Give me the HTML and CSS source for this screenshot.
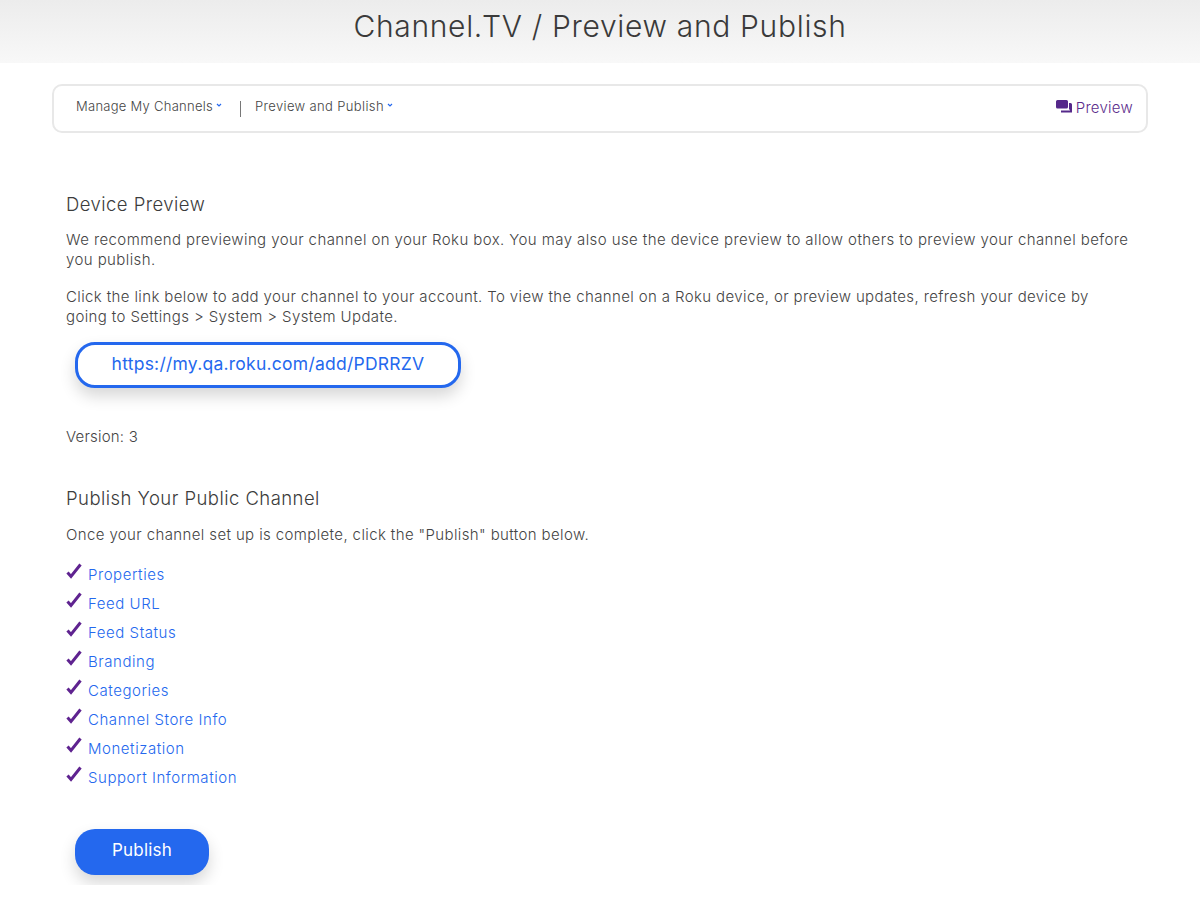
FILE: index.html
```html
<!DOCTYPE html>
<html lang="en">
<head>
<meta charset="utf-8">
<title>Channel.TV / Preview and Publish</title>
<link rel="stylesheet" href="styles.css">
</head>
<body>
<header class="top"><h1>Channel.TV / Preview and Publish</h1></header>
<nav class="crumbs">
  <div class="crumb-item first">Manage My Channels<svg class="caret" viewBox="0 0 6 4"><path d="M1 1l2 2 2-2"/></svg></div>
  <span class="sep"></span>
  <div class="crumb-item second">Preview and Publish<svg class="caret" viewBox="0 0 6 4"><path d="M1 1l2 2 2-2"/></svg></div>
  <a class="preview">
    <svg class="chat" viewBox="0 0 16 13"><path d="M1.500 0h9A1.500 1.500 0 0 1 12 1.500V7a1.500 1.500 0 0 1-1.500 1.500H1.500A1.500 1.500 0 0 1 0 7V1.500A1.500 1.500 0 0 1 1.500 0z"/><path d="M13 3h1.500A1.500 1.500 0 0 1 16 4.500V12.500H5V10.500h8.500a.5.5 0 0 0 0-1H13z"/></svg>
    Preview</a>
</nav>
<main class="content">
  <h2 class="h-device">Device Preview</h2>
  <p class="p1">We recommend previewing your channel on your Roku box. You may also use the device preview to allow others to preview your channel before you publish.</p>
  <p class="p2">Click the link below to add your channel to your account. To view the channel on a Roku device, or preview updates, refresh your device by going to Settings &gt; System &gt; System Update.</p>
  <a class="link-btn">https://my.qa.roku.com/add/PDRRZV</a>
  <p class="version">Version: 3</p>
  <h2 class="h-publish">Publish Your Public Channel</h2>
  <p class="p3">Once your channel set up is complete, click the "Publish" button below.</p>
  <ul class="checks">
    <li><svg class="tick" viewBox="0 0 16 16"><path d="M1.500 9.500l3.500 4L14.500 1.500"/></svg><a>Properties</a></li>
    <li><svg class="tick" viewBox="0 0 16 16"><path d="M1.500 9.500l3.500 4L14.500 1.500"/></svg><a>Feed URL</a></li>
    <li><svg class="tick" viewBox="0 0 16 16"><path d="M1.500 9.500l3.500 4L14.500 1.500"/></svg><a>Feed Status</a></li>
    <li><svg class="tick" viewBox="0 0 16 16"><path d="M1.500 9.500l3.500 4L14.500 1.500"/></svg><a>Branding</a></li>
    <li><svg class="tick" viewBox="0 0 16 16"><path d="M1.500 9.500l3.500 4L14.500 1.500"/></svg><a>Categories</a></li>
    <li><svg class="tick" viewBox="0 0 16 16"><path d="M1.500 9.500l3.500 4L14.500 1.500"/></svg><a>Channel Store Info</a></li>
    <li><svg class="tick" viewBox="0 0 16 16"><path d="M1.500 9.500l3.500 4L14.500 1.500"/></svg><a>Monetization</a></li>
    <li><svg class="tick" viewBox="0 0 16 16"><path d="M1.500 9.500l3.500 4L14.500 1.500"/></svg><a>Support Information</a></li>
  </ul>
  <button class="publish">Publish</button>
</main>
</body>
</html>
```
FILE: styles.css
```css
* { box-sizing: border-box; }
html, body { margin: 0; padding: 0; }
body { background: #fff; color: #444; font-family: Inter, "Noto Sans", sans-serif; font-weight: 300; height: 912px; overflow: hidden; }
.top { height: 63px; background: linear-gradient(#ececec, #f8f8f8); text-align: center; }
.top h1 { margin: 0; padding-top: 7px; font-size: 30px; line-height: 38px; font-weight: 300; color: #3a3a3a; letter-spacing: 0.68px; }
.crumbs { margin: 21px 52px 0; height: 49px; border: 2px solid #e8e8e8; border-radius: 10px; display: flex; align-items: center; padding: 0 13px 0 22px; font-size: 13px; color: #444; font-weight: 300; }
.crumb-item { display: flex; align-items: center; letter-spacing: 0.27px; margin-top: -6px; }
.crumb-item.second { letter-spacing: 0.36px; }
.caret { width: 6px; height: 4px; margin: -2px 0 0 3px; fill: none; stroke: #2468ee; stroke-width: 1.2; }
.sep { width: 1px; height: 16px; background: #777; margin: 0 14px 0 18px; }
.preview { margin-left: auto; display: flex; align-items: center; color: #5c2d8c; font-size: 15px; font-weight: 300; letter-spacing: 0.25px; margin-top: -2px; }
.chat { width: 16px; height: 13px; fill: #55288a; margin-right: 4px; margin-top: -3px; }
.content { padding: 0 66px; height: 752px; overflow: hidden; }
h2 { margin: 0; font-size: 18.5px; line-height: 24px; font-weight: 300; color: #3c3c3c; letter-spacing: 0.45px; }
.h-device { margin-top: 59px; }
p { margin: 0; font-size: 15px; line-height: 20px; letter-spacing: 0.41px; color: #444; }
.p1 { margin-top: 14px; }
.p2 { margin-top: 17px; letter-spacing: 0.38px; }
.link-btn { display: flex; align-items: center; justify-content: center; width: 386px; height: 46px; margin: 15px 0 0 9px; padding-bottom: 4px; border: 3px solid #2468ee; border-radius: 20px; background: #fff; color: #2468ee; font-size: 17.5px; font-weight: 400; letter-spacing: 0.25px; box-shadow: 0 8px 16px rgba(0,0,0,.16); }
.version { margin-top: 39px; letter-spacing: 0.2px; }
.h-publish { margin-top: 39px; }
.p3 { margin-top: 15px; letter-spacing: 0.38px; }
.checks { list-style: none; margin: 15px 0 0; padding: 0; }
.checks li { height: 29px; display: flex; align-items: center; font-size: 15px; letter-spacing: 0.55px; color: #2468ee; }
.tick { width: 16px; height: 16px; margin: -7px 6px 0 0; fill: none; stroke: #5f2390; stroke-width: 3; }
.publish { display: block; width: 134px; height: 46px; margin: 37px 0 0 9px; padding-bottom: 5px; border: 0; border-radius: 20px; background: #2468ee; color: #fff; font: 400 17px Inter, "Noto Sans", sans-serif; letter-spacing: 0.2px; box-shadow: 0 8px 16px rgba(0,0,0,.16); }
```
